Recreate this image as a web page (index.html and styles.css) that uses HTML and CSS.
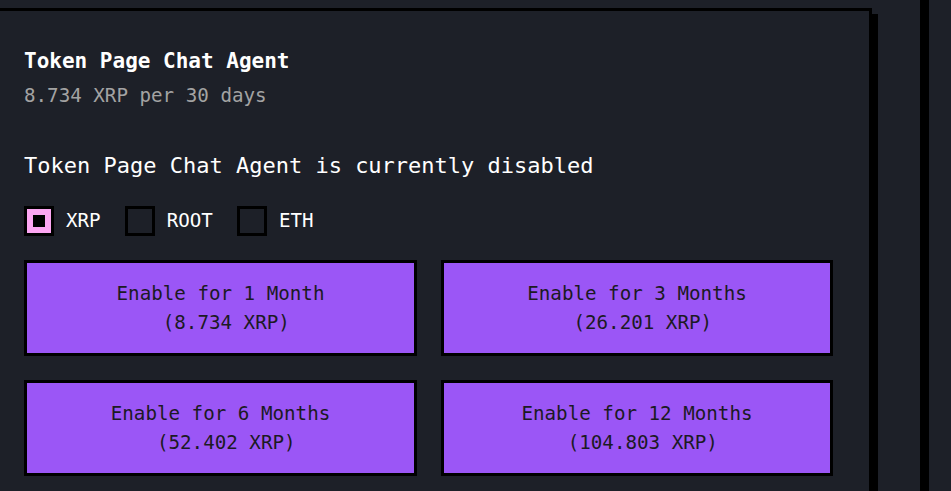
FILE: index.html
```html
<!DOCTYPE html>
<html lang="en">
<head>
<meta charset="utf-8">
<title>Token Page Chat Agent</title>
<link rel="stylesheet" href="styles.css">
</head>
<body>
<div class="page">
  <section class="card">
    <h2 class="title">Token Page Chat Agent</h2>
    <p class="price">8.734 XRP per 30 days</p>
    <p class="status">Token Page Chat Agent is currently disabled</p>
    <div class="currencies">
      <label class="option"><span class="box checked"><span class="dot"></span></span><span class="opt-label">XRP</span></label>
      <label class="option"><span class="box"></span><span class="opt-label">ROOT</span></label>
      <label class="option"><span class="box"></span><span class="opt-label">ETH</span></label>
    </div>
    <div class="plans">
      <button class="plan">Enable for 1 Month<br>&nbsp;(8.734 XRP)</button>
      <button class="plan">Enable for 3 Months<br>&nbsp;(26.201 XRP)</button>
      <button class="plan">Enable for 6 Months<br>&nbsp;(52.402 XRP)</button>
      <button class="plan">Enable for 12 Months<br>&nbsp;(104.803 XRP)</button>
    </div>
  </section>
  <div class="divider"></div>
</div>
</body>
</html>
```
FILE: styles.css
```css
html, body {
  margin: 0;
  padding: 0;
  height: 100%;
  overflow: hidden;
  background: #1d2028;
}

body {
  font-family: "DejaVu Sans Mono", "Liberation Mono", monospace;
  color: #ffffff;
}

.page {
  display: flex;
  align-items: flex-start;
  height: 100%;
}

.card {
  flex: none;
  box-sizing: border-box;
  width: 887px;
  height: 560px;
  margin: 8px 0 0 -15px;
  padding: 36px 36px 0 36px;
  background: #1d2028;
  border: 3px solid #000;
  box-shadow: 6px 6px 0 #000;
}

.title {
  margin: 0;
  font-size: 21px;
  line-height: 28px;
  font-weight: bold;
  color: #ffffff;
}

.price {
  margin: 8px 0 0;
  font-size: 19.2px;
  line-height: 26px;
  color: #a3a3a3;
}

.status {
  margin: 42px 0 0;
  font-size: 22px;
  line-height: 30px;
  color: #ffffff;
}

.currencies {
  display: flex;
  align-items: center;
  gap: 24px;
  margin-top: 25px;
}

.option {
  display: flex;
  align-items: center;
  gap: 12px;
}

.box {
  box-sizing: border-box;
  width: 30px;
  height: 30px;
  border: 3px solid #000;
  display: flex;
  align-items: center;
  justify-content: center;
}

.box.checked {
  background: #fca6f2;
}

.dot {
  width: 12px;
  height: 12px;
  background: #000;
}

.opt-label {
  font-size: 19.2px;
  line-height: 26px;
  color: #ffffff;
}

.plans {
  display: grid;
  grid-template-columns: 393px 392px;
  gap: 24px;
  margin-top: 24px;
}

.plan {
  box-sizing: border-box;
  height: 96px;
  border: 3px solid #000;
  background: #9b56f6;
  color: #1c1a24;
  font-family: "DejaVu Sans Mono", "Liberation Mono", monospace;
  font-size: 19.2px;
  line-height: 29px;
  text-align: center;
  padding: 0;
  margin: 0;
  cursor: pointer;
}

.divider {
  flex: none;
  width: 9px;
  height: 100%;
  margin-left: 48px;
  background: #000;
}
```
